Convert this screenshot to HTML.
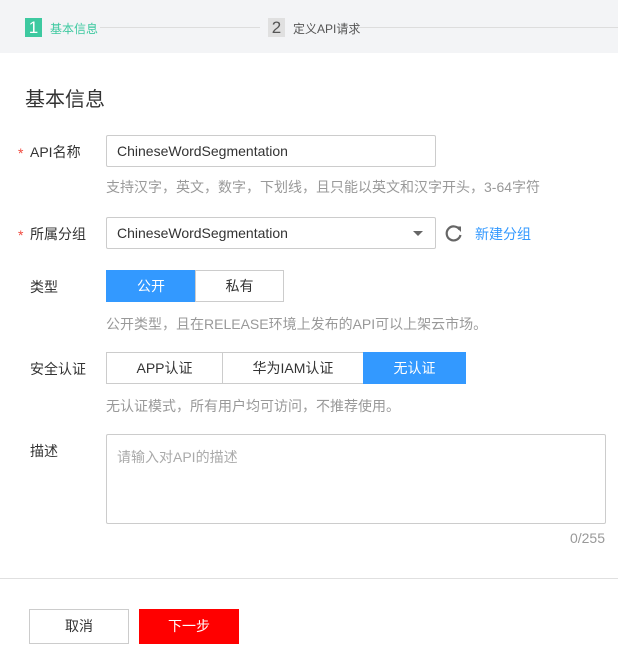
<!DOCTYPE html><html><head><meta charset="utf-8"><style>
*{margin:0;padding:0;box-sizing:border-box}
body{width:618px;height:657px;background:#fff;font-family:"Liberation Sans","Noto Sans CJK SC",sans-serif;font-size:14px;color:#333;position:relative;overflow:hidden}
.a{position:absolute}
.hdr{left:0;top:0;width:618px;height:53px;background:#f3f4f6}
.box{width:17px;height:19px;font-size:17px;line-height:19px;text-align:center}
.lbl{font-size:14px;color:#333;left:30px}
.star{color:#f0493e;left:18px;font-size:14px}
.inp{border:1px solid #ccc;border-radius:2px;background:#fff;padding-left:10px;font-size:14px;color:#333}
.hint{color:#999;font-size:14px;left:106px}
.btn{border:1px solid #ccc;text-align:center;font-size:14px;line-height:30px;background:#fff}
.on{background:#3399ff;border-color:#3399ff;color:#fff}
</style></head><body>
<div class="a hdr"></div>
<div class="a box" style="left:25px;top:18px;background:#3dc9a0;color:#fff">1</div>
<div class="a" style="left:50px;top:20px;color:#3dc9a0;font-size:12px">基本信息</div>
<div class="a" style="left:100px;top:27px;width:160px;height:1px;background:#ddd"></div>
<div class="a box" style="left:268px;top:18px;background:#e0e0e0;color:#555">2</div>
<div class="a" style="left:293px;top:20px;color:#555;font-size:12px">定义API请求</div>
<div class="a" style="left:358px;top:27px;width:260px;height:1px;background:#ddd"></div>
<div class="a" style="left:25px;top:83px;font-size:20px;color:#333">基本信息</div>

<div class="a star" style="top:145px">*</div><div class="a lbl" style="top:142px">API名称</div>
<div class="a inp" style="left:106px;top:135px;width:330px;height:32px;line-height:30px">ChineseWordSegmentation</div>
<div class="a hint" style="top:177px">支持汉字，英文，数字，下划线，且只能以英文和汉字开头，3-64字符</div>

<div class="a star" style="top:227px">*</div><div class="a lbl" style="top:224px">所属分组</div>
<div class="a inp" style="left:106px;top:217px;width:330px;height:32px;line-height:30px">ChineseWordSegmentation</div>
<div class="a" style="left:413px;top:231px;width:0;height:0;border-left:5px solid transparent;border-right:5px solid transparent;border-top:5px solid #666"></div>
<svg class="a" style="left:444px;top:223px" width="20" height="20" viewBox="0 0 20 20"><path d="M15.5 6.5A7 7 0 1 0 16.5 12" fill="none" stroke="#666" stroke-width="2.2"/><path d="M11.5 3.5L17 3.5L17 9Z" fill="#666"/></svg>
<div class="a" style="left:475px;top:224px;color:#3399ff">新建分组</div>

<div class="a lbl" style="top:277px">类型</div>
<div class="a btn on" style="left:106px;top:270px;width:90px;height:32px">公开</div>
<div class="a btn" style="left:195px;top:270px;width:89px;height:32px">私有</div>
<div class="a hint" style="top:314px">公开类型，且在RELEASE环境上发布的API可以上架云市场。</div>

<div class="a lbl" style="top:359px">安全认证</div>
<div class="a btn" style="left:106px;top:352px;width:117px;height:32px">APP认证</div>
<div class="a btn" style="left:222px;top:352px;width:142px;height:32px">华为IAM认证</div>
<div class="a btn on" style="left:363px;top:352px;width:103px;height:32px">无认证</div>
<div class="a hint" style="top:396px">无认证模式，所有用户均可访问，不推荐使用。</div>

<div class="a lbl" style="top:441px">描述</div>
<div class="a inp" style="left:106px;top:434px;width:500px;height:90px;padding-top:12px;color:#aaa;font-size:14px">请输入对API的描述</div>
<div class="a" style="left:545px;top:530px;width:60px;text-align:right;color:#999">0/255</div>

<div class="a" style="left:0;top:578px;width:618px;height:1px;background:#e0e0e0"></div>
<div class="a btn" style="left:29px;top:609px;width:100px;height:35px;line-height:33px">取消</div>
<div class="a btn" style="left:139px;top:609px;width:100px;height:35px;line-height:33px;background:#ff0000;border-color:#ff0000;color:#fff">下一步</div>
</body></html>
